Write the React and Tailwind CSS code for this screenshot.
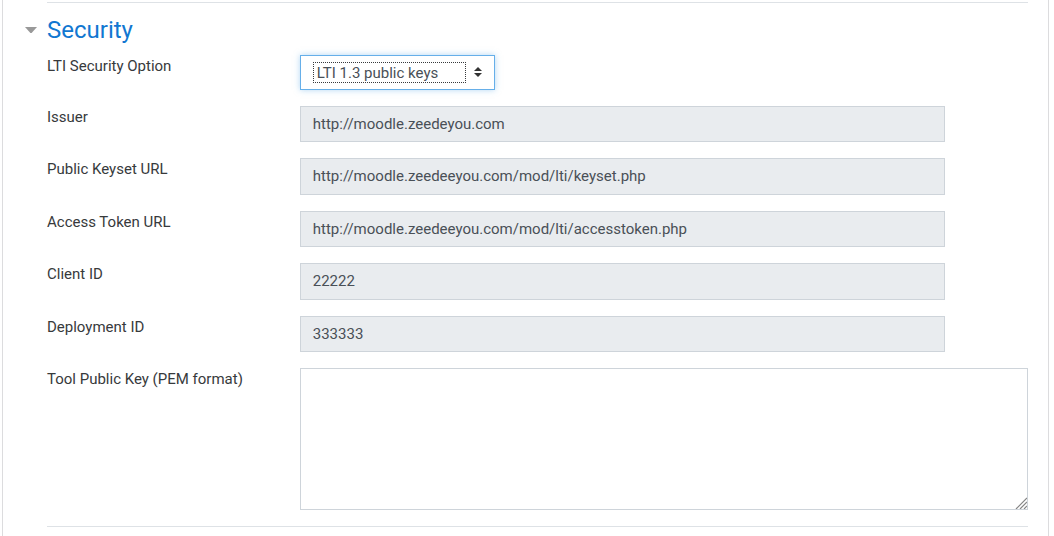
import { useState } from "react";

const fields = [
  { id: "issuer", label: "Issuer", value: "http://moodle.zeedeyou.com" },
  { id: "keyset", label: "Public Keyset URL", value: "http://moodle.zeedeeyou.com/mod/lti/keyset.php" },
  { id: "token", label: "Access Token URL", value: "http://moodle.zeedeeyou.com/mod/lti/accesstoken.php" },
  { id: "client", label: "Client ID", value: "22222" },
  { id: "deployment", label: "Deployment ID", value: "333333" },
];

function Row({ id, label, children }) {
  return (
    <div className="-mx-[15px] mb-4 flex text-[15px] leading-normal">
      <div className="w-1/4 px-[15px]">
        <label htmlFor={id}>{label}</label>
      </div>
      <div className="flex w-3/4 px-[15px]">{children}</div>
    </div>
  );
}

export default function App() {
  const [open, setOpen] = useState(true);
  return (
    <main className="mr-[5px] ml-[2px] min-h-screen border-x border-[#dcdcde] bg-white pt-[2px] pr-5 font-['Roboto','Liberation_Sans',sans-serif] text-[#373a3c]">
      <hr className="ml-11 border-[#dee2e6]" />
      <h2 className="pt-[13px] pl-[22px] text-2xl leading-[1.2] text-[#1177d1]">
        <button
          type="button"
          aria-expanded={open}
          onClick={() => setOpen(!open)}
          className="flex items-center gap-[10px]"
        >
          <svg width="12" height="6" viewBox="0 0 12 6" className={open ? "" : "-rotate-90"} aria-hidden="true">
            <path d="M0 0h12L6.6 6H5.4z" fill="#999" />
          </svg>
          Security
        </button>
      </h2>
      {open && (
        <form className="pt-[10px] pl-11">
          <Row id="option" label="LTI Security Option">
            <div className="flex items-center gap-2 border border-[#66afe9] px-3 py-[6px] shadow-[0_0_6px_rgba(102,175,233,0.5)]">
              <select
                id="option"
                defaultValue="1.3"
                className="h-[21px] w-[153px] appearance-none border border-dotted border-[#373a3c] bg-white pt-px pl-[3px] text-[15px] leading-[19px] text-[#495057] outline-none"
              >
                <option value="1.3">LTI 1.3 public keys</option>
              </select>
              <svg width="8" height="10" viewBox="0 0 8 10" aria-hidden="true">
                <path d="M4 0l4 4H0zM4 10L0 6h8z" fill="#333" />
              </svg>
            </div>
          </Row>
          {fields.map((f) => (
            <Row key={f.id} id={f.id} label={f.label}>
              <input
                id={f.id}
                type="text"
                readOnly
                defaultValue={f.value}
                className="w-[645px] max-w-full border border-[#ced4da] bg-[#e9ecef] px-3 py-1.5 text-[15px] leading-normal text-[#495057] outline-none"
              />
            </Row>
          ))}
          <Row id="pem" label="Tool Public Key (PEM format)">
            <div className="relative w-full">
              <textarea
                id="pem"
                className="block h-[142px] w-full resize-y border border-[#ced4da] px-3 py-1.5 outline-none"
              />
              <svg
                width="12"
                height="12"
                viewBox="0 0 12 12"
                className="pointer-events-none absolute right-px bottom-px bg-white"
                aria-hidden="true"
              >
                <path d="M1 12L12 1M5 12l7-7M9 12l3-3" stroke="#858585" strokeWidth="1.2" />
              </svg>
            </div>
          </Row>
          <hr className="border-[#dee2e6]" />
        </form>
      )}
    </main>
  );
}
